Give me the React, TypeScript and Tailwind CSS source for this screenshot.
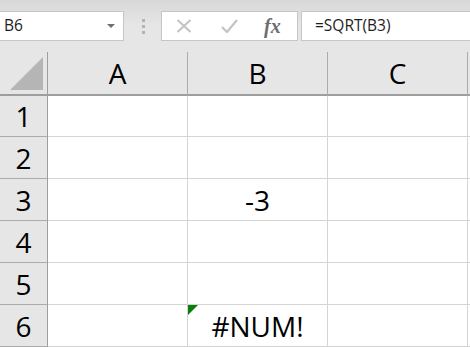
import type { ReactNode } from 'react'

const cols = ['A', 'B', 'C']
const rows = [1, 2, 3, 4, 5, 6]

const cells: Record<string, string> = {
  B3: '-3',
  B6: '#NUM!',
}

function FormulaBar() {
  return (
    <div className="h-[52px] bg-gradient-to-b from-[#d8d8d8] via-[#e6e6e6] to-[#e6e6e6] pt-[11px] flex items-start">
      <div className="w-[124px] h-[30px] bg-white border border-l-0 border-[#c6c6c6] flex items-center justify-between pl-[4px] pr-[8px]">
        <span className="text-[15.5px] text-[#1e1e1e]">B6</span>
        <svg width="8" height="4" viewBox="0 0 8 4">
          <path d="M0 0h8L4 4z" fill="#6f6f6f" />
        </svg>
      </div>
      <div className="w-[37px] h-[30px] flex flex-col items-center justify-center gap-[3px] pl-[1px]">
        <span className="w-[3px] h-[3px] bg-[#b3b3b3]" />
        <span className="w-[3px] h-[3px] bg-[#b3b3b3]" />
        <span className="w-[3px] h-[3px] bg-[#b3b3b3]" />
      </div>
      <div className="w-[137px] h-[30px] bg-white border border-[#c6c6c6] flex items-center pl-[14px]">
        <svg width="16" height="14" viewBox="0 0 16 14" className="mr-[29px]">
          <path d="M1.5 1l13 12M14.5 1l-13 12" stroke="#c3c3c3" strokeWidth="2" fill="none" />
        </svg>
        <svg width="17" height="14" viewBox="0 0 17 14" className="mr-[26px]">
          <path d="M1 8l5 5L16 1" stroke="#c3c3c3" strokeWidth="2.2" fill="none" />
        </svg>
        <span className="text-[20px] italic font-bold text-[#6e6e6e] font-['Liberation_Serif',serif] leading-none">fx</span>
      </div>
      <div className="flex-1 h-[30px] ml-[3px] bg-white border border-r-0 border-[#c6c6c6] flex items-center pl-[13px]">
        <span className="text-[15.5px] text-[#1e1e1e]">=SQRT(B3)</span>
      </div>
    </div>
  )
}

function HeaderCell({ children, last }: { children?: ReactNode; last?: boolean }) {
  return (
    <div
      className={
        'h-[44px] bg-[#e6e6e6] border-b-2 border-[#9e9e9e] flex items-center justify-center text-[28px] text-black ' +
        (last ? '' : 'border-r border-r-[#ababab]')
      }
    >
      {children}
    </div>
  )
}

export default function App() {
  return (
    <div className="w-[470px] h-[347px] overflow-hidden bg-[#e6e6e6] font-['Open_Sans',sans-serif]">
      <FormulaBar />
      <div className="grid grid-cols-[48px_140px_140px_140px_1fr]">
        <div className="h-[44px] bg-[#e6e6e6] border-b-2 border-r border-[#9e9e9e] flex items-end justify-end pr-[4px] pb-[4px]">
          <svg width="33" height="33" viewBox="0 0 33 33">
            <path d="M0 33L33 0v33z" fill="#b5b5b5" />
          </svg>
        </div>
        {cols.map((c) => (
          <HeaderCell key={c}>{c}</HeaderCell>
        ))}
        <HeaderCell last />
        {rows.map((r) => (
          <Row key={r} r={r} />
        ))}
      </div>
    </div>
  )
}

function Row({ r }: { r: number }) {
  const h = r === 1 ? 'h-[41px]' : 'h-[42px]'
  return (
    <>
      <div className={h + ' bg-[#e6e6e6] border-b border-b-[#ababab] border-r border-r-[#9e9e9e] flex items-center justify-center text-[28px] text-black'}>
        {r}
      </div>
      {cols.map((c) => {
        const id = c + r
        const value = cells[id]
        return (
          <div
            key={id}
            className={h + ' relative bg-white border-b border-r border-[#d4d4d4] flex items-center justify-center text-[28px] text-black'}
          >
            {id === 'B6' && (
              <svg width="10" height="10" viewBox="0 0 10 10" className="absolute left-0 top-0">
                <path d="M0 0h10L0 10z" fill="#0a7d0a" />
              </svg>
            )}
            {value}
          </div>
        )
      })}
      <div className={h + ' bg-white border-b border-[#d4d4d4]'} />
    </>
  )
}
